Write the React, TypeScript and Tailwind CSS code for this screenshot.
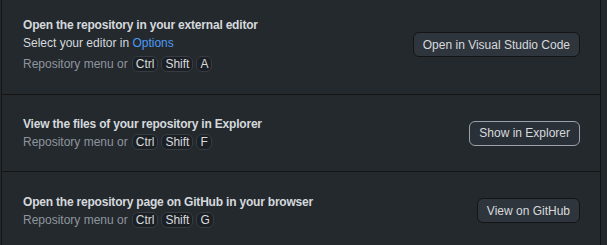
const Kbd = ({ k }: { k: string }) => (
  <kbd className="inline-flex h-[16px] items-center rounded-[6px] border border-[#363c43] bg-[#1c2025] px-[3px] font-['Liberation_Sans',sans-serif] text-[12px] leading-none text-[#d7dade]">
    {k}
  </kbd>
);

const Shortcut = ({ k }: { k: string }) => (
  <div className="flex items-center gap-[3px] text-[12px] text-[#8e959d]">
    <span className="mr-[1px]">Repository menu or</span>
    <Kbd k="Ctrl" />
    <Kbd k="Shift" />
    <Kbd k={k} />
  </div>
);

const rows = [
  {
    title: "Open the repository in your external editor",
    editor: true,
    key: "A",
    button: "Open in Visual Studio Code",
    focused: false,
    h: "h-[94px] pb-[5px]",
  },
  {
    title: "View the files of your repository in Explorer",
    editor: false,
    key: "F",
    button: "Show in Explorer",
    focused: true,
    h: "h-[77px]",
  },
  {
    title: "Open the repository page on GitHub in your browser",
    editor: false,
    key: "G",
    button: "View on GitHub",
    focused: false,
    h: "h-[78px]",
  },
];

export default function App() {
  return (
    <div className="h-[245px] w-[607px] overflow-hidden bg-[#24292e] font-['Liberation_Sans',sans-serif]">
      <div className="ml-[1px] w-[600px] border-x border-[#141414]">
        {rows.map((r, i) => (
          <div
            key={r.key}
            className={`flex items-center justify-between pl-[21px] pr-[20px] ${r.h} ${
              i > 0 ? "border-t border-[#141414]" : ""
            }`}
          >
            <div className="flex flex-col">
              <div className="text-[12px] leading-[18px] font-bold tracking-[-0.2px] text-[#d5d9dd]">
                {r.title}
              </div>
              {r.editor && (
                <div className="text-[12px] leading-[18px] text-[#d5d9dd]">
                  Select your editor in <span className="text-[#4b9af4]">Options</span>
                </div>
              )}
              <div className={r.editor ? "mt-[3px]" : ""}>
                <Shortcut k={r.key} />
              </div>
            </div>
            <button
              className={`h-[25px] rounded-[6px] border px-[9px] text-[12px] text-[#d7dade] ${
                r.focused
                  ? "border-[#9ba1a8] bg-[#2a3037]"
                  : "border-[#141414] bg-[#2f353c]"
              }`}
            >
              {r.button}
            </button>
          </div>
        ))}
      </div>
    </div>
  );
}
